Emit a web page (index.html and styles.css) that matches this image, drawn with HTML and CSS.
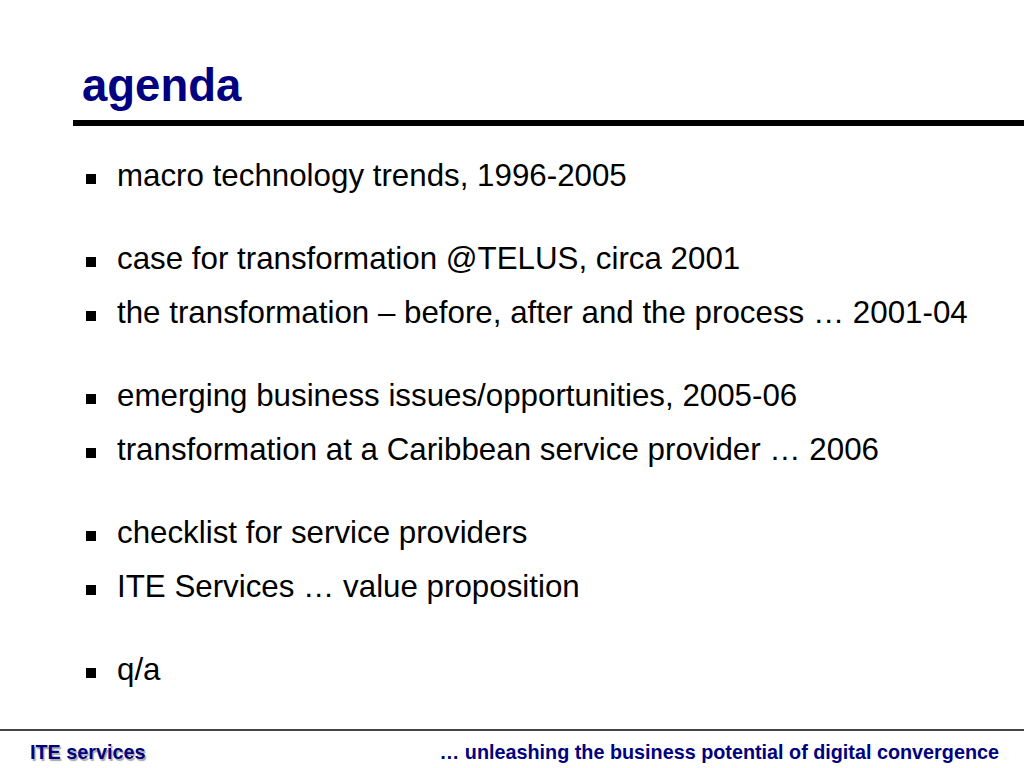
FILE: index.html
```html
<!DOCTYPE html>
<html lang="en">
<head>
<meta charset="utf-8">
<title>agenda</title>
<link rel="stylesheet" href="styles.css">
</head>
<body>
<div class="slide">
  <header class="head">
    <h1 class="title">agenda</h1>
    <div class="rule"></div>
  </header>
  <main class="agenda">
    <div class="group">
      <div class="item"><span class="bullet"></span><span class="text">macro technology trends, 1996-2005</span></div>
    </div>
    <div class="group">
      <div class="item"><span class="bullet"></span><span class="text">case for transformation @TELUS, circa 2001</span></div>
      <div class="item"><span class="bullet"></span><span class="text">the transformation – before, after and the process … 2001-04</span></div>
    </div>
    <div class="group">
      <div class="item"><span class="bullet"></span><span class="text">emerging business issues/opportunities, 2005-06</span></div>
      <div class="item"><span class="bullet"></span><span class="text">transformation at a Caribbean service provider … 2006</span></div>
    </div>
    <div class="group">
      <div class="item"><span class="bullet"></span><span class="text">checklist for service providers</span></div>
      <div class="item"><span class="bullet"></span><span class="text">ITE Services … value proposition</span></div>
    </div>
    <div class="group">
      <div class="item"><span class="bullet"></span><span class="text">q/a</span></div>
    </div>
  </main>
  <footer class="foot">
    <div class="foot-line"></div>
    <div class="foot-row">
      <span class="brand">ITE services</span>
      <span class="tagline">… unleashing the business potential of digital convergence</span>
    </div>
  </footer>
</div>
</body>
</html>
```

FILE: styles.css
```css
html, body {
  margin: 0;
  padding: 0;
  background: #ffffff;
}

body {
  font-family: "Liberation Sans", Arial, sans-serif;
}

.slide {
  width: 1024px;
  height: 768px;
  display: flex;
  flex-direction: column;
  overflow: hidden;
  background: #ffffff;
}

.head {
  padding-top: 60px;
}

.title {
  margin: 0 0 8px 82px;
  font-size: 45.5px;
  line-height: 52px;
  font-weight: bold;
  color: #000080;
}

.rule {
  margin-left: 73px;
  height: 6px;
  background: #000000;
}

.agenda {
  display: flex;
  flex-direction: column;
  gap: 47px;
  padding-top: 32px;
  padding-left: 86px;
}

.group {
  display: flex;
  flex-direction: column;
  gap: 18px;
}

.item {
  display: flex;
  align-items: flex-start;
  font-size: 31.3px;
  line-height: 36px;
  color: #000000;
  white-space: nowrap;
}

.bullet {
  flex: none;
  width: 10px;
  height: 10px;
  margin-top: 16px;
  margin-right: 21px;
  background: #000000;
}

.foot {
  margin-top: auto;
  padding-bottom: 4px;
}

.foot-line {
  height: 2px;
  background: #444444;
  margin-bottom: 10px;
}

.foot-row {
  display: flex;
  justify-content: space-between;
  align-items: baseline;
  padding: 0 25px 0 30px;
  font-size: 19.8px;
  line-height: 23px;
  font-weight: bold;
  color: #000080;
}

.brand {
  text-shadow: 1.5px 1.5px 1px rgba(0, 0, 0, 0.35);
}
```
